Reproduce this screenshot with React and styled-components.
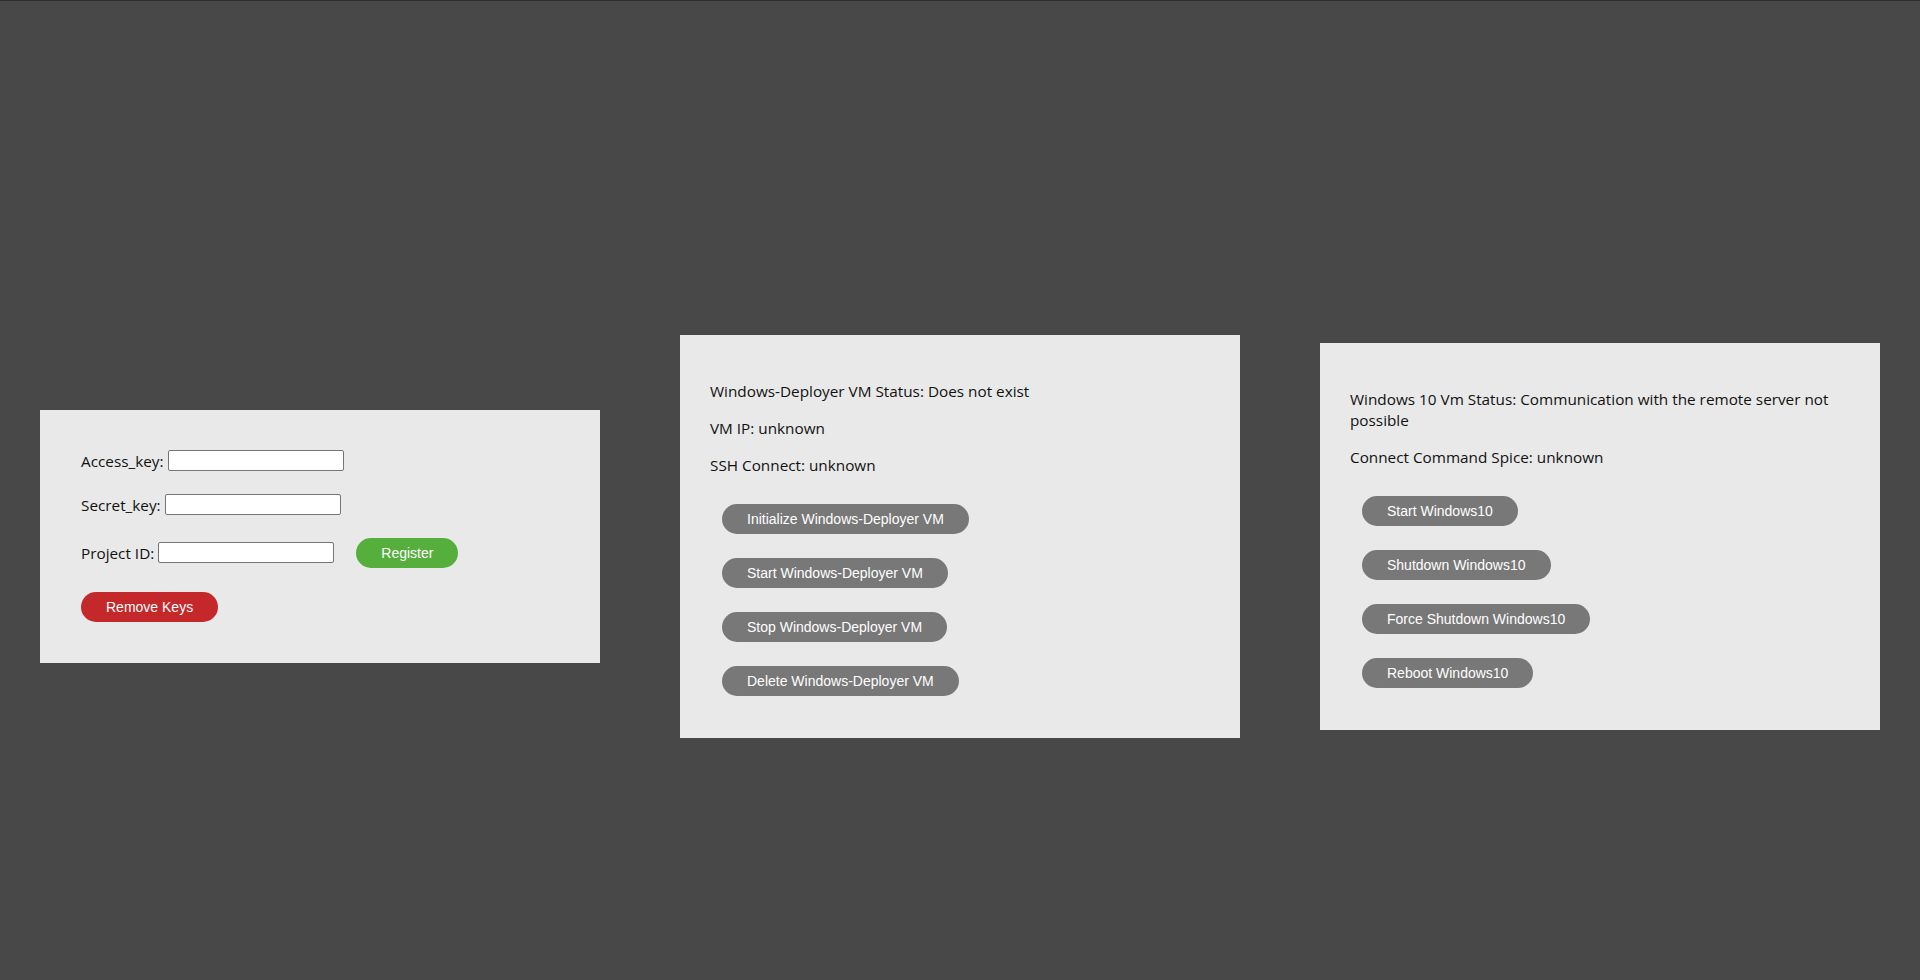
import React from "react";
import styled, { createGlobalStyle } from "styled-components";

const Global = createGlobalStyle`
  html, body { margin: 0; padding: 0; }
  body {
    background: #484848;
    font-family: "Segoe UI", "Open Sans", "Noto Sans", sans-serif;
    font-size: 15.3px;
    color: #111;
  }
  * { box-sizing: border-box; }
`;

const Page = styled.div`
  min-height: 980px;
  border-top: 1px solid #2e2e2e;
  padding-top: 91px;
  display: flex;
  align-items: center;
  justify-content: space-around;
`;

const Panel = styled.section`
  width: 560px;
  background: #e9e9e9;
  padding: ${(p) => p.$pad || "30px"};
  display: flex;
  flex-direction: column;
  align-items: flex-start;
`;

const Form = styled.div`
  display: flex;
  flex-direction: column;
  align-items: flex-start;
  gap: 22px;
`;

const Row = styled.div`
  display: flex;
  align-items: center;
  min-height: ${(p) => p.$h || 22}px;
`;

const Label = styled.label`
  line-height: 22px;
  margin-right: 4px;
  white-space: nowrap;
`;

const Input = styled.input`
  width: 176px;
  height: 21px;
  border: 1px solid #767676;
  border-radius: 2px;
  background: #fff;
  padding: 1px 2px;
  font-size: 13px;
`;

const Status = styled.p`
  margin: 0 0 16px;
  line-height: 21px;
  max-width: 490px;
  &:first-child { margin-top: 16px; }
`;

const PillButton = styled.button`
  display: block;
  height: 30px;
  padding: 0 25px;
  margin: ${(p) => p.$margin || "12px"};
  border: none;
  border-radius: 15px;
  background: ${(p) => p.$bg || "#787878"};
  color: #fff;
  font-family: "Liberation Sans", Arial, sans-serif;
  font-size: 14px;
  white-space: nowrap;
  cursor: pointer;
`;

export default function App() {
  return (
    <>
      <Global />
      <Page>
        <Panel $pad="40px 41px 41px 41px">
          <Form>
            <Row>
              <Label htmlFor="ak">Access_key:</Label>
              <Input id="ak" type="text" />
            </Row>
            <Row>
              <Label htmlFor="sk">Secret_key:</Label>
              <Input id="sk" type="text" />
            </Row>
            <Row $h={30}>
              <Label htmlFor="pid">Project ID:</Label>
              <Input id="pid" type="text" />
              <PillButton $bg="#56ae3c" $margin="0 0 0 22px">Register</PillButton>
            </Row>
            <PillButton $bg="#c4282a" $margin="2px 0 0 0">Remove Keys</PillButton>
          </Form>
        </Panel>

        <Panel>
          <Status>Windows-Deployer VM Status: Does not exist</Status>
          <Status>VM IP: unknown</Status>
          <Status>SSH Connect: unknown</Status>
          <PillButton>Initialize Windows-Deployer VM</PillButton>
          <PillButton>Start Windows-Deployer VM</PillButton>
          <PillButton>Stop Windows-Deployer VM</PillButton>
          <PillButton>Delete Windows-Deployer VM</PillButton>
        </Panel>

        <Panel>
          <Status>Windows 10 Vm Status: Communication with the remote server not possible</Status>
          <Status>Connect Command Spice: unknown</Status>
          <PillButton>Start Windows10</PillButton>
          <PillButton>Shutdown Windows10</PillButton>
          <PillButton>Force Shutdown Windows10</PillButton>
          <PillButton>Reboot Windows10</PillButton>
        </Panel>
      </Page>
    </>
  );
}
